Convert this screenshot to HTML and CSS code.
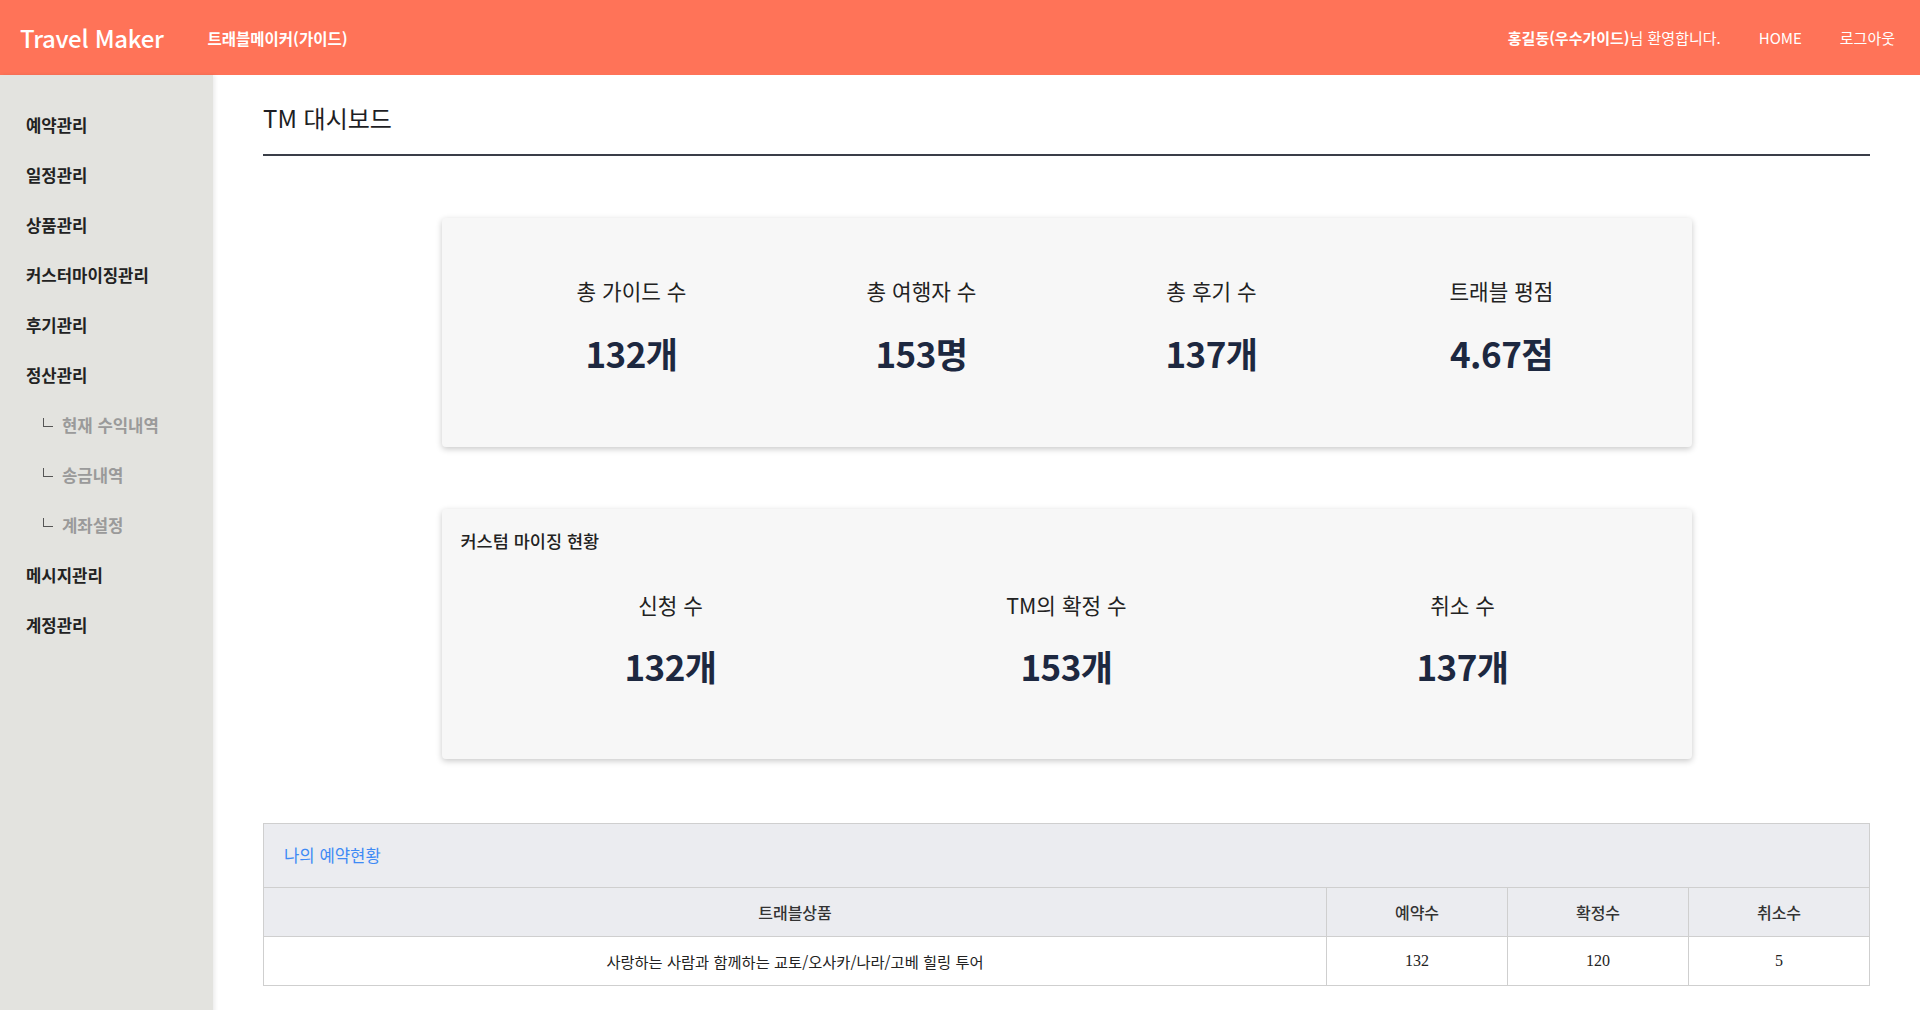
FILE: index.html
```html
<!DOCTYPE html>
<html lang="ko">
<head>
<meta charset="utf-8">
<title>TM 대시보드</title>
<link rel="stylesheet" href="styles.css">
</head>
<body>
<header class="topbar">
  <div class="brand">
    <span class="logo">Travel Maker</span>
    <span class="subtitle">트래블메이커(가이드)</span>
  </div>
  <nav class="topnav">
    <span class="welcome"><b>홍길동(우수가이드)</b>님 환영합니다.</span>
    <a class="toplink" href="#">HOME</a>
    <a class="toplink" href="#">로그아웃</a>
  </nav>
</header>
<div class="layout">
  <aside class="sidebar">
    <ul class="menu">
      <li class="menu-item">예약관리</li>
      <li class="menu-item">일정관리</li>
      <li class="menu-item">상품관리</li>
      <li class="menu-item">커스터마이징관리</li>
      <li class="menu-item">후기관리</li>
      <li class="menu-item">정산관리</li>
      <li class="menu-sub"><span class="elbow"></span>현재 수익내역</li>
      <li class="menu-sub"><span class="elbow"></span>송금내역</li>
      <li class="menu-sub"><span class="elbow"></span>계좌설정</li>
      <li class="menu-item">메시지관리</li>
      <li class="menu-item">계정관리</li>
    </ul>
  </aside>
  <main class="main">
    <h1 class="page-title">TM 대시보드</h1>

    <section class="card card-total">
      <div class="stats stats-4">
        <div class="stat"><div class="stat-label">총 가이드 수</div><div class="stat-value">132개</div></div>
        <div class="stat"><div class="stat-label">총 여행자 수</div><div class="stat-value">153명</div></div>
        <div class="stat"><div class="stat-label">총 후기 수</div><div class="stat-value">137개</div></div>
        <div class="stat"><div class="stat-label">트래블 평점</div><div class="stat-value">4.67점</div></div>
      </div>
    </section>

    <section class="card card-custom">
      <h2 class="card-title">커스텀 마이징 현황</h2>
      <div class="stats stats-3">
        <div class="stat"><div class="stat-label">신청 수</div><div class="stat-value">132개</div></div>
        <div class="stat"><div class="stat-label">TM의 확정 수</div><div class="stat-value">153개</div></div>
        <div class="stat"><div class="stat-label">취소 수</div><div class="stat-value">137개</div></div>
      </div>
    </section>

    <section class="resv">
      <div class="resv-caption">나의 예약현황</div>
      <table class="resv-table">
        <thead>
          <tr>
            <th class="col-product">트래블상품</th>
            <th class="col-num">예약수</th>
            <th class="col-num">확정수</th>
            <th class="col-num">취소수</th>
          </tr>
        </thead>
        <tbody>
          <tr>
            <td class="cell-product">사랑하는 사람과 함께하는 교토/오사카/나라/고베 힐링 투어</td>
            <td>132</td>
            <td>120</td>
            <td>5</td>
          </tr>
        </tbody>
      </table>
    </section>
  </main>
</div>
</body>
</html>
```
FILE: styles.css
```css
* { box-sizing: border-box; }

html, body {
  margin: 0;
  padding: 0;
}

body {
  font-family: "Noto Sans CJK KR", "Noto Sans", sans-serif;
  color: #222;
  background: #fff;
  min-height: 100vh;
  display: flex;
  flex-direction: column;
}

.topbar {
  height: 75px;
  flex: 0 0 75px;
  background: #ff7358;
  color: #fff;
  display: flex;
  align-items: center;
  justify-content: space-between;
  padding: 0 25px 0 20px;
}

.brand {
  display: flex;
  align-items: center;
}

.logo {
  font-size: 24px;
  font-weight: 500;
  letter-spacing: -0.3px;
}

.subtitle {
  margin-left: 44px;
  font-size: 15.5px;
  font-weight: 700;
  margin-top: 1px;
}

.topnav {
  display: flex;
  align-items: center;
  gap: 38px;
  font-size: 15px;
}

.welcome b { font-weight: 700; }

.toplink {
  color: #fff;
  text-decoration: none;
}

.layout {
  flex: 1;
  display: flex;
}

.sidebar {
  width: 213px;
  flex: 0 0 213px;
  background: #e3e3df;
  box-shadow: 2px 0 4px rgba(0, 0, 0, 0.08);
  position: relative;
  z-index: 1;
}

.menu {
  list-style: none;
  margin: 0;
  padding: 25px 0 0 0;
}

.menu-item,
.menu-sub {
  height: 50px;
  line-height: 50px;
  font-size: 16.7px;
}

.menu-item {
  padding-left: 26px;
  font-weight: 700;
  color: #222;
}

.menu-sub {
  padding-left: 43px;
  font-weight: 700;
  color: #9a9a9a;
  display: flex;
  align-items: center;
}

.elbow {
  width: 10px;
  height: 9px;
  border-left: 1px solid #555;
  border-bottom: 1px solid #555;
  margin-right: 9px;
  margin-top: -6px;
}

.main {
  flex: 1;
  padding: 0 50px 40px 50px;
  min-width: 0;
}

.page-title {
  margin: 0;
  padding-top: 27px;
  padding-bottom: 20px;
  font-size: 24px;
  line-height: 32px;
  font-weight: 400;
  color: #1e1e24;
  border-bottom: 2px solid #3a3e48;
}

.card {
  width: 1250px;
  margin: 0 auto;
  background: #f7f7f7;
  border-radius: 4px;
  box-shadow: 0 2px 6px rgba(0, 0, 0, 0.22);
}

.card-total {
  margin-top: 62px;
  padding: 59px 45px 72px 45px;
}

.card-custom {
  margin-top: 62px;
  padding: 20px 31px 71px 31px;
}

.card-title {
  margin: 0 0 38px -12px;
  font-size: 17.5px;
  line-height: 24px;
  font-weight: 500;
  color: #222;
}

.stats {
  display: grid;
}

.stats-4 { grid-template-columns: repeat(4, 1fr); }
.stats-3 { grid-template-columns: repeat(3, 1fr); }

.stat {
  text-align: center;
}

.stat-label {
  font-size: 21.3px;
  line-height: 28px;
  color: #222;
}

.card-total .stat-label { margin-bottom: 26px; }
.card-custom .stat-label { margin-bottom: 25px; }

.stat-value {
  font-size: 35px;
  line-height: 44px;
  font-weight: 700;
  color: #1d2840;
  letter-spacing: -0.5px;
}

.resv {
  margin-top: 64px;
}

.resv-caption {
  height: 64px;
  line-height: 62px;
  background: #ebecf0;
  border: 1px solid #cfcfcf;
  border-bottom: none;
  padding-left: 20px;
  font-size: 16.7px;
  color: #3e8af5;
}

.resv-table {
  width: 100%;
  border-collapse: collapse;
  font-family: "Liberation Serif", "Noto Sans CJK KR", serif;
  font-size: 16px;
  color: #222;
}

.resv-table th,
.resv-table td {
  border: 1px solid #cfcfcf;
  height: 49px;
  text-align: center;
  padding: 0;
}

.resv-table th {
  background: #ebecf0;
  font-size: 16px;
  font-weight: 500;
  font-family: "Noto Sans CJK KR", sans-serif;
  color: #333;
}

.resv-table .cell-product {
  font-family: "Noto Sans CJK KR", sans-serif;
  font-size: 15.3px;
}

.col-num { width: 181px; }
```
